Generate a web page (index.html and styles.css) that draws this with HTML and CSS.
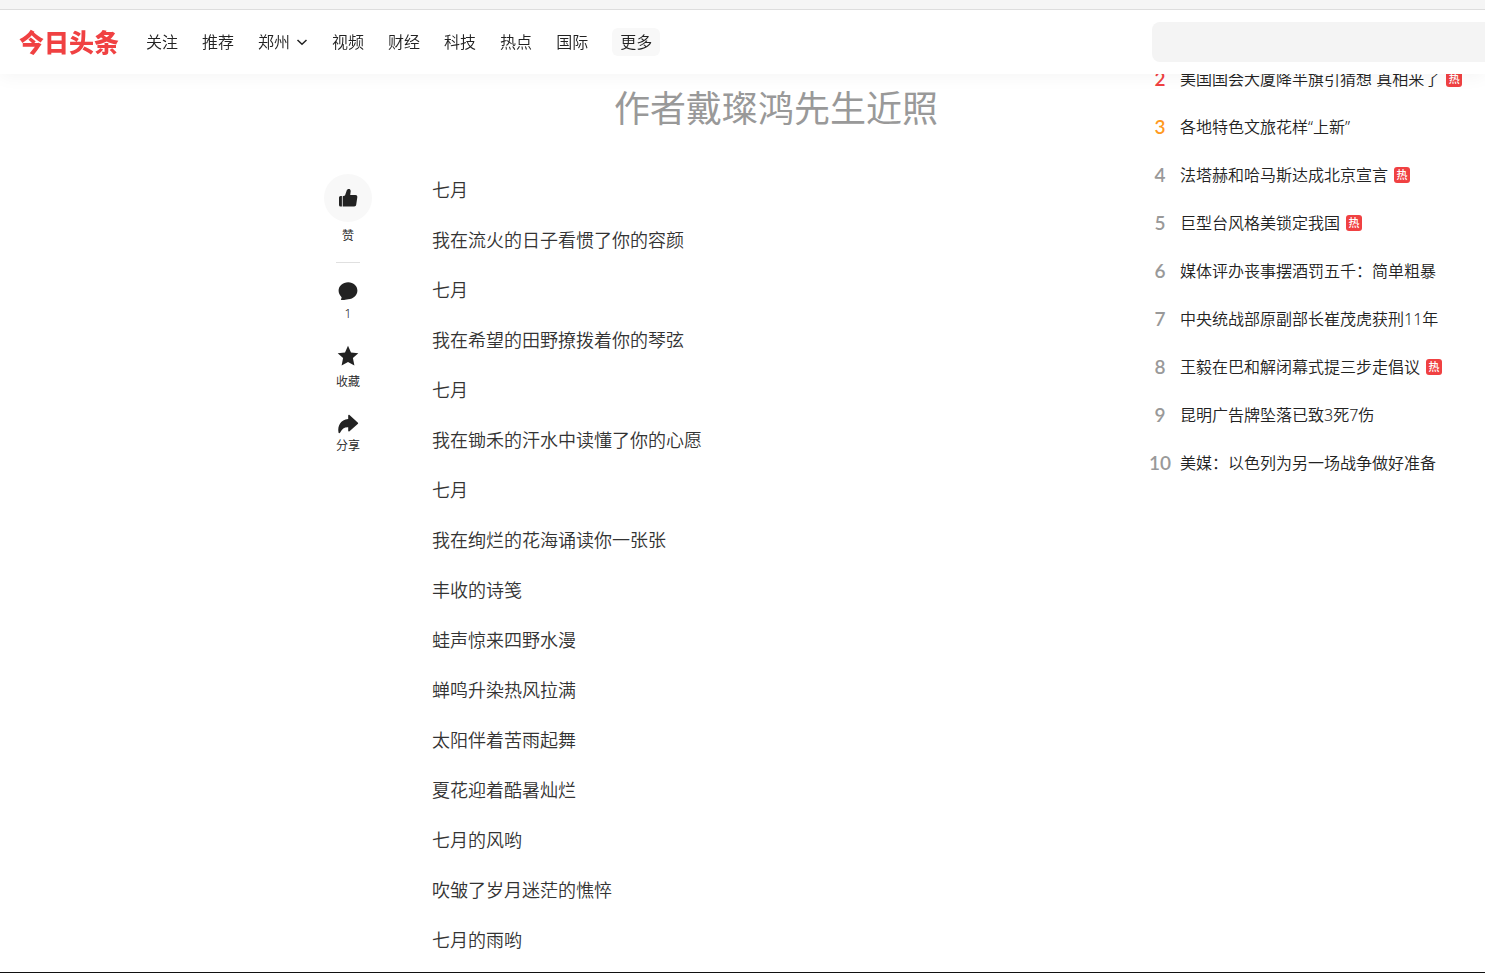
FILE: index.html
```
<!DOCTYPE html>
<html lang="zh-CN">
<head>
<meta charset="utf-8">
<meta name="viewport" content="width=device-width, initial-scale=1">
<title>今日头条</title>
<link rel="stylesheet" href="styles.css">
</head>
<body>
<header class="topbar">
  <a class="logo" href="#">今日头条</a>
  <nav class="nav">
    <a href="#">关注</a>
    <a href="#">推荐</a>
    <a class="city" href="#">郑州<svg class="chevron" viewBox="0 0 12 12"><path d="M1.500 4 6 8.200 10.500 4"/></svg></a>
    <a href="#">视频</a>
    <a href="#">财经</a>
    <a href="#">科技</a>
    <a href="#">热点</a>
    <a href="#">国际</a>
    <button class="more" type="button">更多</button>
  </nav>
  <input class="search" type="search" aria-label="搜索">
</header>

<main class="page">
  <aside class="rail">
    <button class="action like" type="button">
      <span class="disc"><svg class="icon" viewBox="0 0 20 20"><path d="M2.600 8h1.300v10.500H2.600A1.600 1.600 0 0 1 1 16.900V9.600A1.600 1.600 0 0 1 2.600 8zM4.700 8.200 7 7.600 8.700 2.600C9.300.6 12.700.4 12.700 3.200L12.200 7h5.200c1.300 0 2.100.9 1.900 2.200l-1.100 7.600c-.2 1.100-.9 1.700-2 1.700H4.700z"/></svg></span>
      <span>赞</span>
    </button>
    <hr class="rule">
    <button class="action comment" type="button">
      <svg class="icon" viewBox="0 0 20 20"><path d="M10.200 1.200c5.300 0 9.200 3.700 9.200 8.400s-3.900 8.600-9.200 8.600c-1 0-2 .2-3 .6-1.300.4-2.700.3-3.700.1-.7-.1-.7-.6-.3-1.100.5-.6.600-1.300 0-2C1.500 14 .6 12 .6 9.600c0-4.700 4.200-8.400 9.600-8.400z"/></svg>
      <span>1</span>
    </button>
    <button class="action star" type="button">
      <svg class="icon wide" viewBox="0 0 22 22"><path d="M11 .8 14 7.400l7.300.8-5.400 4.900 1.500 7.400L11 16.900l-6.400 3.600 1.500-7.400L.7 8.200 8 7.400z"/></svg>
      <span>收藏</span>
    </button>
    <button class="action share" type="button">
      <svg class="icon wide" viewBox="0 0 22 20"><path d="M11.200 1.600c0-.8.7-1.100 1.300-.6l8.200 7.500c.6.500.6 1 0 1.500l-8.200 7.300c-.6.500-1.300.2-1.300-.6v-3.400c-3.800-.2-6.100 1.700-8 5.300-.5.900-1.500 1-1.700 0C.4 11.600 3.600 5.600 11.200 5z"/></svg>
      <span>分享</span>
    </button>
  </aside>

  <article class="article">
    <p class="caption">作者戴璨鸿先生近照</p>
    <p>七月</p>
    <p>我在流火的日子看惯了你的容颜</p>
    <p>七月</p>
    <p>我在希望的田野撩拨着你的琴弦</p>
    <p>七月</p>
    <p>我在锄禾的汗水中读懂了你的心愿</p>
    <p>七月</p>
    <p>我在绚烂的花海诵读你一张张</p>
    <p>丰收的诗笺</p>
    <p>蛙声惊来四野水漫</p>
    <p>蝉鸣升染热风拉满</p>
    <p>太阳伴着苦雨起舞</p>
    <p>夏花迎着酷暑灿烂</p>
    <p>七月的风哟</p>
    <p>吹皱了岁月迷茫的憔悴</p>
    <p>七月的雨哟</p>
  </article>

  <ol class="hot">
    <li><span class="rank second">2</span><a href="#">美国国会大厦降半旗引猜想 真相来了</a><span class="tag">热</span></li>
    <li><span class="rank third">3</span><a href="#">各地特色文旅花样“上新”</a></li>
    <li><span class="rank">4</span><a href="#">法塔赫和哈马斯达成北京宣言</a><span class="tag">热</span></li>
    <li><span class="rank">5</span><a href="#">巨型台风格美锁定我国</a><span class="tag">热</span></li>
    <li><span class="rank">6</span><a href="#">媒体评办丧事摆酒罚五千：简单粗暴</a></li>
    <li><span class="rank">7</span><a href="#">中央统战部原副部长崔茂虎获刑11年</a></li>
    <li><span class="rank">8</span><a href="#">王毅在巴和解闭幕式提三步走倡议</a><span class="tag">热</span></li>
    <li><span class="rank">9</span><a href="#">昆明广告牌坠落已致3死7伤</a></li>
    <li><span class="rank">10</span><a href="#">美媒：以色列为另一场战争做好准备</a></li>
  </ol>
</main>
</body>
</html>
```

FILE: styles.css
```
* {
  box-sizing: border-box;
}

body {
  margin: 0;
  min-height: 100vh;
  background: #fff;
  border-bottom: 1px solid #111;
  color: #222;
  font: 350 16px/24px "Noto Sans", "Noto Sans CJK SC", sans-serif;
}

a {
  color: inherit;
  text-decoration: none;
}

button {
  border: 0;
  padding: 0;
  background: none;
  color: inherit;
  font: inherit;
}

/* Header stays above the scrolled content */
.topbar {
  position: fixed;
  top: 0;
  left: 0;
  right: 0;
  z-index: 2;
  display: flex;
  align-items: center;
  height: 74px;
  padding-left: 19px;
  background: #fff;
  border-top: 10px solid #f5f5f5;
  box-shadow: 0 4px 16px rgba(0, 0, 0, 0.04);
}

.topbar::before {
  content: "";
  position: absolute;
  top: -1px;
  left: 0;
  right: 0;
  height: 1px;
  background: #ddd;
}

.logo {
  color: #f04142;
  font-size: 25px;
  font-weight: 900;
  line-height: 32px;
}

.nav {
  display: flex;
  align-items: center;
  gap: 24px;
  margin-left: 27px;
}

.city {
  display: flex;
  align-items: center;
  gap: 6px;
}

.chevron {
  width: 12px;
  height: 12px;
  fill: none;
  stroke: #222;
  stroke-width: 1.5;
}

.more {
  padding: 2px 8px;
  border-radius: 6px;
  background: #f8f8f8;
}

.search {
  width: 333px;
  height: 40px;
  margin-left: auto;
  padding: 0 16px;
  border: 0;
  border-radius: 8px 0 0 8px;
  background: #f4f4f4;
  font: inherit;
  appearance: none;
}

.page {
  display: grid;
  grid-template-columns: 48px minmax(0, 1fr) 335px;
  padding: 55px 0 0 324px;
}

.rail {
  display: flex;
  flex-direction: column;
  align-items: center;
  padding-top: 119px;
  font-size: 12px;
  line-height: 16px;
}

.action {
  display: flex;
  flex-direction: column;
  align-items: center;
}

.disc {
  display: grid;
  place-items: center;
  width: 48px;
  height: 48px;
  margin-bottom: 6px;
  border-radius: 50%;
  background: #f8f8f8;
}

.icon {
  width: 20px;
  height: 20px;
  fill: #222;
}

.icon.wide {
  width: 22px;
}

.rule {
  width: 24px;
  height: 1px;
  margin: 18px 0;
  border: 0;
  background: #e0e0e0;
}

.comment {
  gap: 5px;
}

.star {
  gap: 7px;
  margin-top: 23px;
}

.star .icon {
  height: 22px;
}

.share {
  gap: 4px;
  margin-top: 24px;
}

.article {
  padding: 30px 0 0 60px;
  color: #333;
  font-size: 18px;
  line-height: 30px;
}

.article p {
  margin: 0 0 20px;
}

.article p:last-child {
  margin-bottom: 0;
}

.article .caption {
  max-width: 688px;
  margin-bottom: 42px;
  color: #999;
  font-size: 36px;
  font-weight: 400;
  line-height: 48px;
  text-align: center;
}

.hot {
  margin: 0;
  padding: 0;
  list-style: none;
}

.hot li {
  display: flex;
  align-items: center;
  height: 48px;
  white-space: nowrap;
}

.rank {
  width: 20px;
  margin-right: 10px;
  display: flex;
  justify-content: center;
  color: #999;
  font-family: Lato, sans-serif;
  font-size: 19px;
  font-weight: 600;
}

.rank.second {
  color: #f04142;
}

.rank.third {
  color: #ff9a1f;
}

.tag {
  width: 16px;
  margin-left: 6px;
  border-radius: 3px;
  background: #f04142;
  color: #fff;
  font-size: 11px;
  font-weight: 500;
  line-height: 16px;
  text-align: center;
}
```
